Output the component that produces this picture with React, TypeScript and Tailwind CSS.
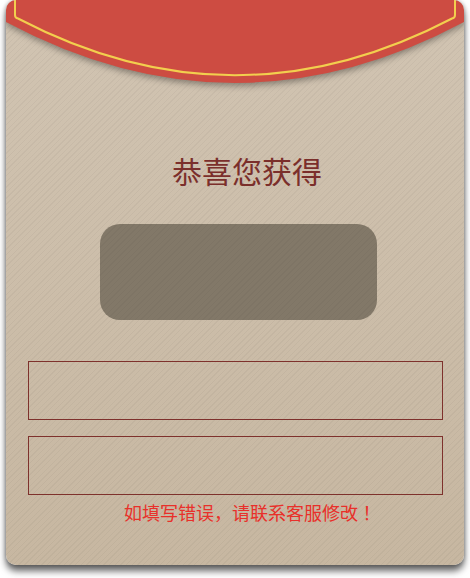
export default function App() {
  return (
    <div className="w-[470px] h-[578px] bg-white pl-[6px] font-['Noto_Sans_CJK_SC','Noto_Sans',sans-serif]">
      <div className="relative w-[458px] h-[565px] rounded-[10px] overflow-hidden shadow-[0_6px_7px_rgba(0,0,0,0.6),0_0_4px_rgba(0,0,0,0.3)] bg-[image:repeating-linear-gradient(135deg,rgba(0,0,0,0.035)_0px,rgba(0,0,0,0.035)_1px,transparent_1px,transparent_4px),linear-gradient(#d1c4b2,#c7b7a1)] flex flex-col">
        {/* red flap */}
        <svg
          width="458"
          height="83"
          viewBox="0 0 458 83"
          className="block shrink-0 overflow-visible drop-shadow-[0_3px_3px_rgba(0,0,0,0.35)]"
        >
          <path d="M0 0 H458 V22 Q229 144 0 22 Z" fill="#cd4c42" />
          <path
            d="M9 -2 V15 Q9 18 12 18.5 Q229 132 446 18.5 Q449 18 449 15 V-2"
            fill="none"
            stroke="#f2cf4e"
            strokeWidth="2"
          />
        </svg>

        <div className="ml-[166px] mt-[67px] h-[40px] text-[30px] leading-[40px] text-[#7b2f2b] whitespace-nowrap">
          恭喜您获得
        </div>

        <div className="ml-[94px] mt-[34px] w-[277px] h-[96px] rounded-[20px] bg-[image:repeating-linear-gradient(135deg,rgba(0,0,0,0.03)_0px,rgba(0,0,0,0.03)_1px,transparent_1px,transparent_4px),linear-gradient(#827868,#827868)]" />

        <div className="ml-[22px] mt-[41px] w-[415px] h-[59px] border border-[#7e312c]" />
        <div className="ml-[22px] mt-[16px] w-[415px] h-[59px] border border-[#7e312c]" />

        <div className="ml-[118px] mt-[5px] text-[18px] leading-[24px] text-[#e8302a] whitespace-nowrap font-['Noto_Sans_CJK_JP',sans-serif]">
          如填写错误，请联系客服修改！
        </div>
      </div>
    </div>
  );
}
